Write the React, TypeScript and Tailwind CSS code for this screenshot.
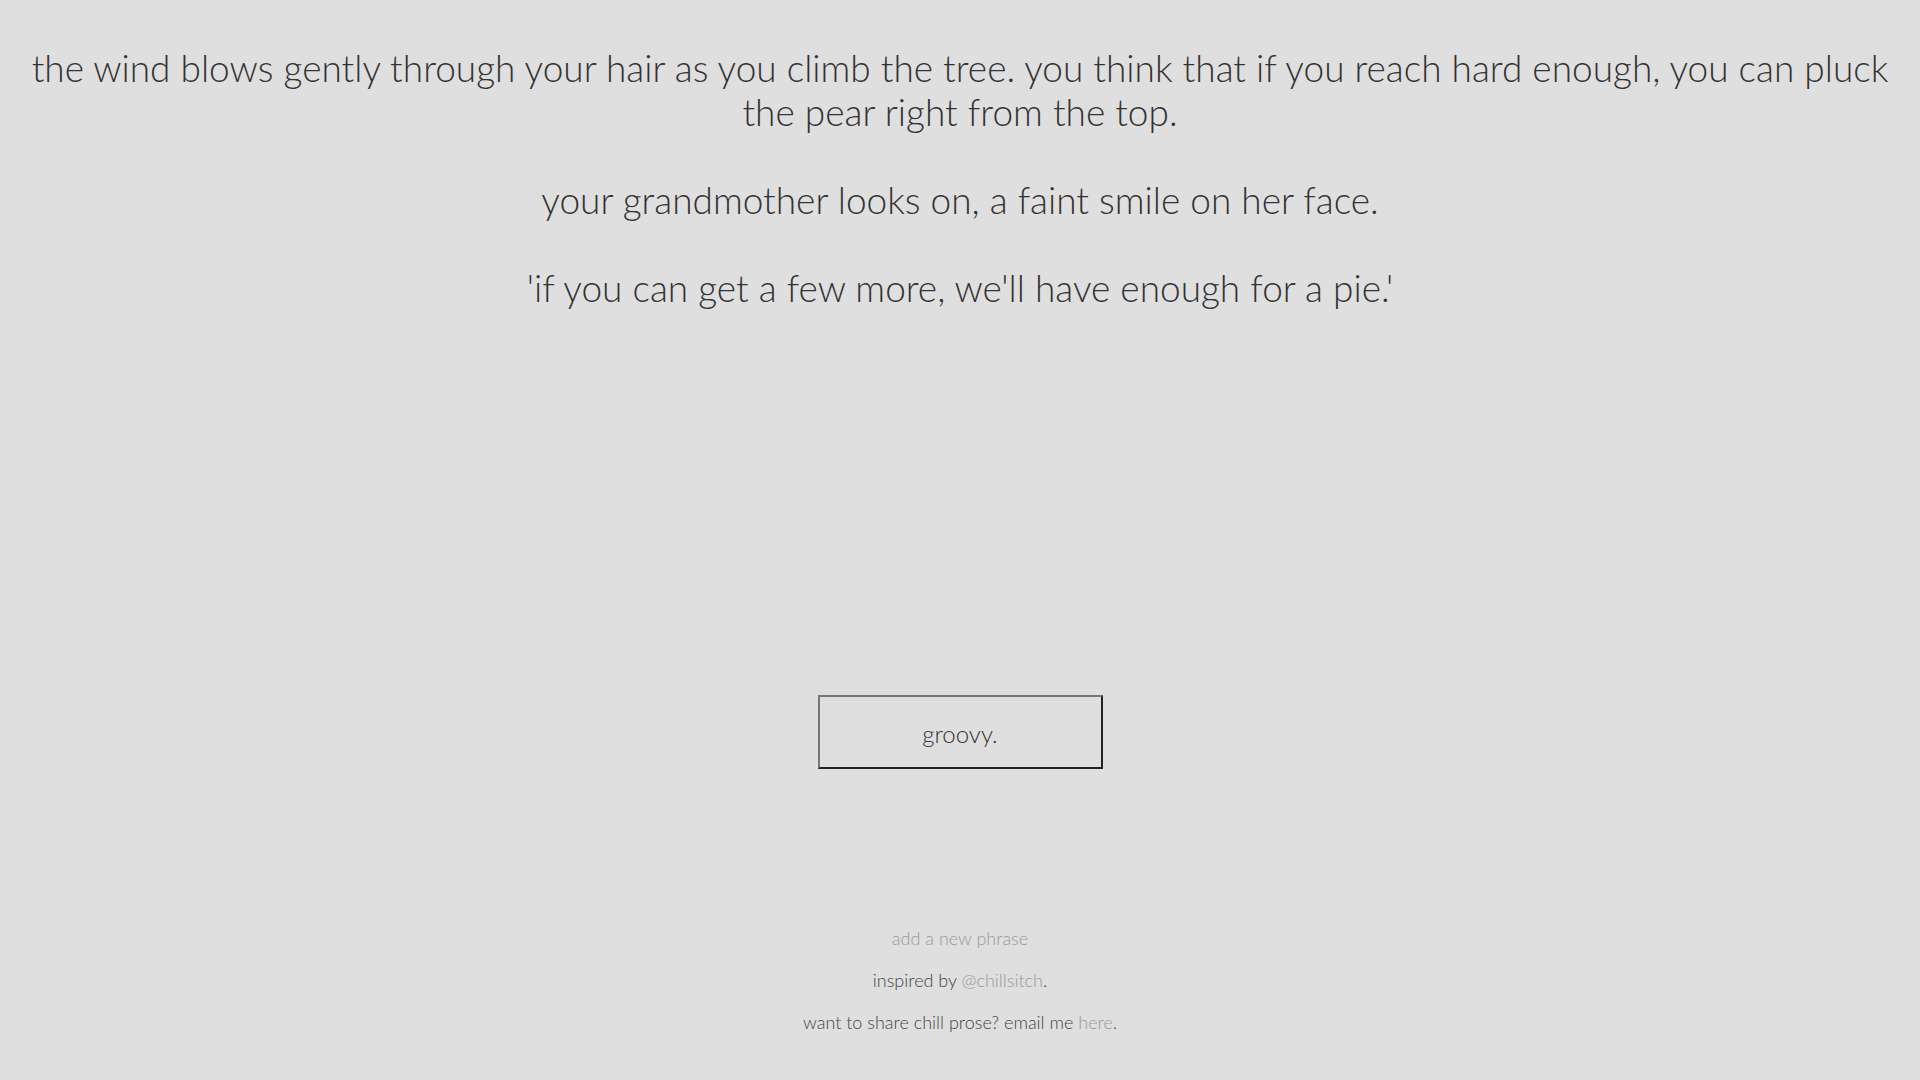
export default function App() {
  return (
    <main className="flex min-h-screen flex-col items-center bg-[#dfdfdf] font-['Lato',sans-serif] text-[#333]">
      {/* Prose */}
      <section className="w-full px-[16px] pt-[46px] text-center text-[37px] font-light leading-[44px]">
        <p>
          the wind blows gently through your hair as you climb the tree. you
          think that if you reach hard enough, you can pluck the pear right from
          the top.
        </p>
        <p className="mt-[44px]">
          your grandmother looks on, a faint smile on her face.
        </p>
        <p className="mt-[44px]">
          'if you can get a few more, we'll have enough for a pie.'
        </p>
      </section>

      {/* Button */}
      <button className="mt-[385px] h-[74px] w-[285px] border-2 border-t-[#767676] border-l-[#767676] border-b-[#222] border-r-[#222] bg-transparent pt-[4px] text-[24px] font-light text-[#333]">
        groovy.
      </button>

      {/* Footer */}
      <footer className="mt-[157px] flex flex-col items-center gap-[18px] text-[18px] leading-[24px] font-light text-[#444]">
        <a className="text-[#999]">add a new phrase</a>
        <p>
          inspired by <a className="text-[#999]">@chillsitch</a>.
        </p>
        <p>
          want to share chill prose? email me{" "}
          <a className="text-[#999]">here</a>.
        </p>
      </footer>
    </main>
  );
}
